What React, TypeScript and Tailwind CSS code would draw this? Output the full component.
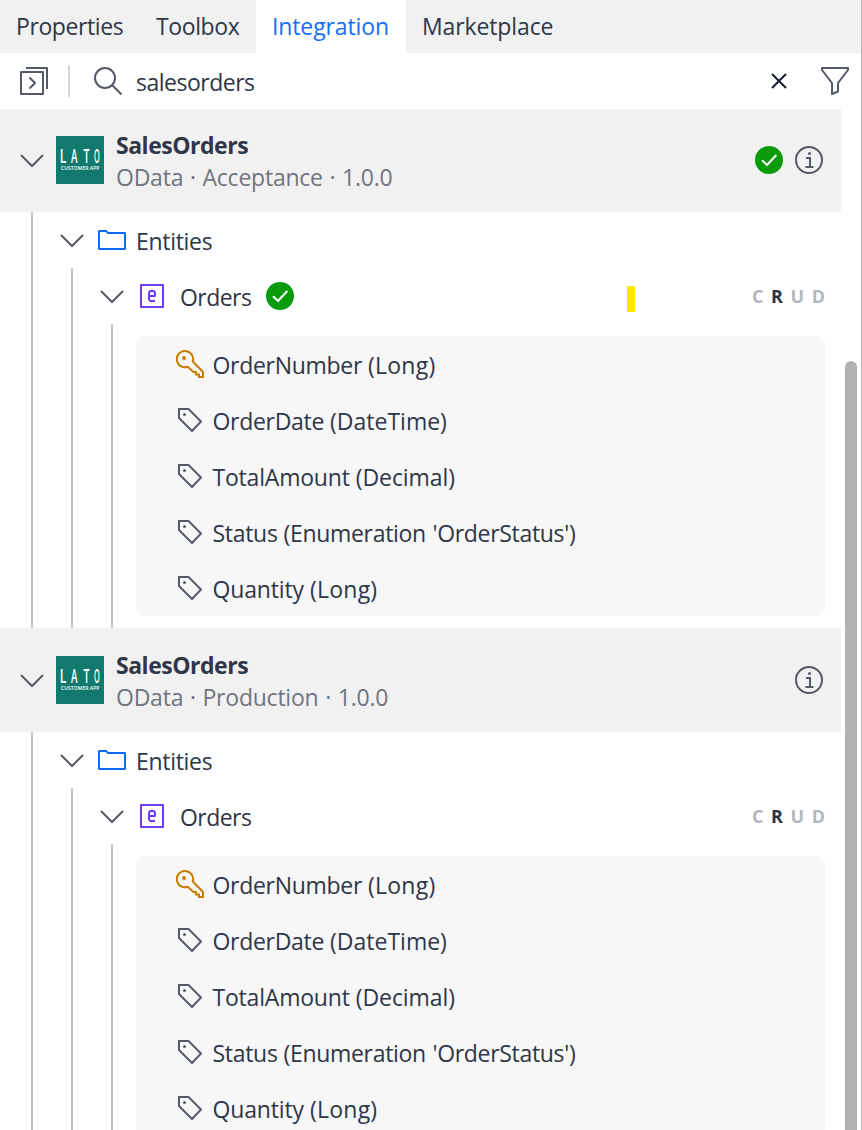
import React from "react";

const Chevron = () => (
  <svg className="size-6 shrink-0" viewBox="0 0 24 24" fill="none" stroke="#555a69" strokeWidth="2">
    <path d="M1 7 12 18 23 7" />
  </svg>
);

const Check = () => (
  <svg className="size-7 shrink-0" viewBox="0 0 28 28" fill="none">
    <circle cx="14" cy="14" r="14" fill="#0a9a0a" />
    <path d="M7 14.2 12 19 21.3 9" stroke="#fff" strokeWidth="2" />
  </svg>
);

const Info = () => (
  <svg className="size-7 shrink-0" viewBox="0 0 28 28" fill="none" stroke="#555a69" strokeWidth="2">
    <circle cx="14" cy="14" r="13" />
    <path d="M11 12h4v9M10.5 21h8" />
    <circle cx="14.5" cy="7.5" r="1.5" fill="#555a69" stroke="none" />
  </svg>
);

const Folder = () => (
  <svg className="h-5 w-7 shrink-0" viewBox="0 0 28 20" fill="none" stroke="#0a6cf5" strokeWidth="2" strokeLinejoin="round">
    <path d="M1 19V1h7l2 2h17V19Z" />
  </svg>
);

const Entity = () => (
  <svg className="size-6 shrink-0" viewBox="0 0 24 24" fill="none" stroke="#6e3bf5" strokeWidth="2" strokeLinejoin="round">
    <rect x="1" y="1" width="22" height="22" />
    <path d="M9 12h6V8.500L13.500 7h-3L9 8.500v7L10.500 17H15" />
  </svg>
);

const KeyIcon = () => (
  <svg className="size-7 shrink-0" viewBox="0 0 28 28" fill="none" stroke="#cc7a00" strokeWidth="2">
    <path d="M16.800 11.500 27 22v5h-4v-2.500h-3V22h-2.500l-5.700-5.200A8.200 8.200 0 1 1 16.800 11.500Z" />
    <circle cx="8" cy="8" r="2" fill="#cc7a00" stroke="none" />
  </svg>
);

const Tag = () => (
  <svg className="size-7 shrink-0" viewBox="0 0 28 28" fill="none" stroke="#555a69" strokeWidth="2">
    <path d="M3 3h9.500L25 15.500 16 25 3 12Z" />
    <circle cx="8.500" cy="8.500" r="1.500" fill="#555a69" stroke="none" />
  </svg>
);

const Logo = () => (
  <svg className="size-12 shrink-0" viewBox="0 0 48 48" fontFamily="Open Sans, sans-serif" fill="#fff">
    <rect width="48" height="48" fill="#11796d" />
    <g fontSize="19.500" textAnchor="middle" fontWeight="600">
      <text transform="translate(7 27.300) scale(.62 1)">L</text>
      <text transform="translate(18.200 27.300) scale(.5 1)">A</text>
      <text transform="translate(30.500 27.300) scale(.55 1)">T</text>
      <text transform="translate(41 27.300) scale(.38 1)">O</text>
    </g>
    <text x="5" y="34.200" fontSize="5.300" fontWeight="600" textLength="38.500" lengthAdjust="spacingAndGlyphs">CUSTOMER APP</text>
  </svg>
);

const fields = [
  { name: "OrderNumber", type: "(Long)", nameClass: "tracking-[-0.3px]", typeClass: "tracking-[0.25px]" },
  { name: "OrderDate", type: "(DateTime)", nameClass: "tracking-[-0.3px]", typeClass: "tracking-normal" },
  { name: "TotalAmount", type: "(Decimal)", nameClass: "tracking-[-0.2px]", typeClass: "tracking-[-0.05px]" },
  { name: "Status", type: "(Enumeration 'OrderStatus')", nameClass: "tracking-[-0.3px]", typeClass: "tracking-[-0.32px] [word-spacing:1px]" },
  { name: "Quantity", type: "(Long)", nameClass: "tracking-[-0.15px]", typeClass: "tracking-[0.25px]" },
];

function Service({ stage, checked }: { stage: string; checked?: boolean }) {
  return (
    <section>
      <header className="flex h-[104px] items-center bg-[#f1f1f1] pr-[18px] pl-5">
        <Chevron />
        <div className="ml-3 flex"><Logo /></div>
        <div className="ml-3 grow pt-0.5">
          <div className="h-8 leading-8 font-bold tracking-[-0.48px]">SalesOrders</div>
          <div className="h-8 leading-8 tracking-[-0.23px] text-[#717580] [word-spacing:1px]">OData · {stage} · 1.0.0</div>
        </div>
        <div className="flex gap-3">
          {checked && <Check />}
          <Info />
        </div>
      </header>
      <div className="ml-[31px] border-l-2 border-[#c1c1c8]">
        <div className="flex h-14 items-center pl-[27px]">
          <Chevron />
          <div className="ml-3.5 flex"><Folder /></div>
          <span className="ml-2.5 pt-0.5 tracking-[-0.3px]">Entities</span>
        </div>
        <div className="ml-[38px] border-l-2 border-[#c1c1c8]">
          <div className="flex h-14 items-center pr-4 pl-[27px]">
            <Chevron />
            <div className="ml-4 flex"><Entity /></div>
            <span className="ml-4 w-[86px] pt-0.5 tracking-[-0.55px]">Orders</span>
            {checked && <Check />}
            {checked && <span className="mt-1.5 ml-[333px] h-[26px] w-2 bg-[#ffe600]" />}
            <div className="ml-auto flex w-[73px] justify-between text-[18px] font-bold text-[#b3b7c0]">
              <span>C</span><span className="text-[#2b3141]">R</span><span>U</span><span>D</span>
            </div>
          </div>
          <div className="ml-[38px] border-l-2 border-[#c1c1c8] py-3 pr-4 pl-[23px]">
            <ul className="rounded-lg bg-[#f7f7f7]">
              {fields.map((f, i) => (
                <li key={f.name} className="flex h-14 items-center pl-10">
                  {i === 0 ? <KeyIcon /> : <Tag />}
                  <span className="ml-[8.5px] pt-0.5">
                    <span className={f.nameClass}>{f.name}</span> <span className={f.typeClass}>{f.type}</span>
                  </span>
                </li>
              ))}
            </ul>
          </div>
        </div>
      </div>
    </section>
  );
}

export default function App() {
  return (
    <div className="flex h-[1130px] w-[862px] flex-col overflow-hidden border-r border-[#b9b9b9] bg-white font-['Open_Sans',sans-serif] text-[23px] whitespace-nowrap text-[#2f3647]">
      <nav className="flex h-[53px] shrink-0 items-center bg-[#f1f1f1] leading-[53px]">
        <span className="w-[140px] pl-4 tracking-[-0.4px]">Properties</span>
        <span className="w-[116px] pl-4 tracking-[-0.4px]">Toolbox</span>
        <span className="w-[150px] bg-white pl-4 tracking-[-0.12px] text-[#146ff5]">Integration</span>
        <span className="pl-4 tracking-[-0.12px]">Marketplace</span>
      </nav>
      <div className="z-10 flex h-14 shrink-0 items-center bg-white pr-3 pl-5">
        <svg className="size-7" viewBox="0 0 28 28" fill="none" stroke="#555a69" strokeWidth="2" strokeLinejoin="round">
          <rect x="1" y="5" width="22" height="22" />
          <path d="M6 1h21v21M9.500 10.500 15 16l-5.500 5.500" />
        </svg>
        <span className="ml-5 h-8 w-0.5 bg-[#d6d6d8]" />
        <svg className="ml-6 size-7" viewBox="0 0 28 28" fill="none" stroke="#555a69" strokeWidth="2">
          <circle cx="11" cy="11" r="10" />
          <path d="m18 18 9.500 9.500" />
        </svg>
        <span className="ml-3.5 grow pt-0.5 tracking-[-0.5px]">salesorders</span>
        <svg className="size-4" viewBox="0 0 16 16" fill="none" stroke="#151c2e" strokeWidth="2">
          <path d="m1 1 14 14M15 1 1 15" />
        </svg>
        <svg className="ml-[34px] size-7" viewBox="0 0 28 28" fill="none" stroke="#555a69" strokeWidth="2" strokeLinejoin="round">
          <path d="M1 1h26v2L17 16v8.500L11 27V16L1 3Z" />
        </svg>
      </div>
      <div className="-mt-px flex min-h-0 grow justify-between overflow-hidden">
        <main className="w-[841px]">
          <Service stage="Acceptance" checked />
          <Service stage="Production" />
        </main>
        <div className="mt-[253px] mr-1 w-3 rounded-t-full bg-[#b1b1b1]" />
      </div>
    </div>
  );
}
